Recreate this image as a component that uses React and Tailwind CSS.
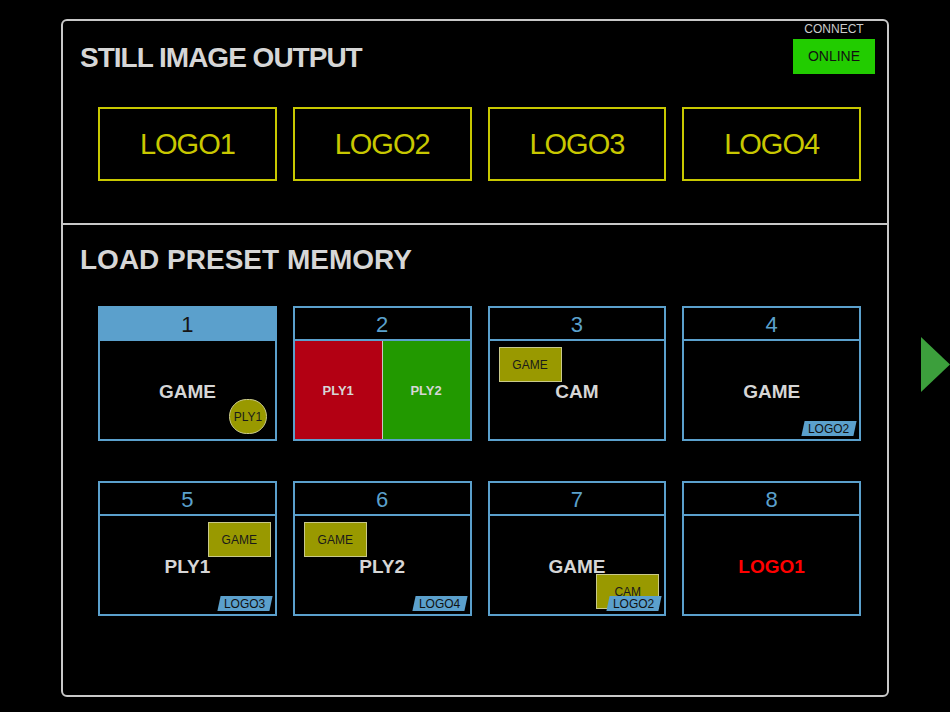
import React from 'react';

const Box = ({ className, children }) => (
    <div className={`absolute w-[63px] h-[35px] bg-[#999900] border border-[#c9c98a] flex items-center justify-center text-[12px] text-[#1a1a1a] ${className}`}>
        {children}
    </div>
);

const Flag = ({ className, children }) => (
    <div className={`absolute w-[52px] h-[15px] -skew-x-12 bg-[#5ba0cc] flex items-center justify-center ${className}`}>
        <span className="skew-x-12 text-[12px] leading-none text-[#111]">{children}</span>
    </div>
);

const Card = ({ n, active, label, labelColor = 'text-[#d6d6d6]', children, split }) => (
    <div className="h-[135px] border-2 border-[#5ba0cc] flex flex-col">
        <div className={`h-[33px] pt-[1px] border-b-2 border-[#5ba0cc] flex items-center justify-center text-[22px] ${active ? 'bg-[#5ba0cc] text-[#161616]' : 'text-[#5ba0cc]'}`}>
            {n}
        </div>
        {split ? (
            <div className="flex-1 flex">
                <div className="flex-1 bg-[#b30013] flex items-center justify-center pt-[2px] text-[13px] font-bold text-[#d6d6d6]">PLY1</div>
                <div className="w-px bg-[#c8c8c8]" />
                <div className="flex-1 bg-[#229900] flex items-center justify-center pt-[2px] text-[13px] font-bold text-[#d6d6d6]">PLY2</div>
            </div>
        ) : (
            <div className="flex-1 relative flex items-center justify-center pt-[4px]">
                <span className={`text-[19px] font-bold ${labelColor}`}>{label}</span>
                {children}
            </div>
        )}
    </div>
);

export default function App() {
    return (
        <div className="min-h-[712px] bg-black font-['Liberation_Sans',Arial,sans-serif] pt-[19px] pl-[61px] flex items-start">
            <div className="w-[828px] h-[678px] border-2 border-[#c8c8c8] rounded-[6px] flex flex-col">
                {/* still image output */}
                <div className="h-[204px] border-b-2 border-[#c8c8c8] flex flex-col">
                    <div className="h-[86px] flex justify-between items-start pl-[17px] pr-[12px]">
                        <h1 className="mt-[23px] h-[28px] leading-[28px] text-[28px] font-bold tracking-[-1px] text-[#d6d6d6]">
                            STILL IMAGE OUTPUT
                        </h1>
                        <div className="flex flex-col items-center">
                            <span className="mt-[1px] text-[12px] leading-[14px] text-[#cccccc]">CONNECT</span>
                            <button className="mt-[3px] w-[82px] h-[35px] bg-[#22cc00] text-[14px] text-[#111]">ONLINE</button>
                        </div>
                    </div>
                    <div className="ml-[35px] w-[763px] grid grid-cols-4 gap-4">
                        {['LOGO1', 'LOGO2', 'LOGO3', 'LOGO4'].map((l) => (
                            <div key={l} className="h-[74px] pt-[2px] border-2 border-[#c8c800] flex items-center justify-center text-[29px] tracking-[-1px] text-[#c8c800]">
                                {l}
                            </div>
                        ))}
                    </div>
                </div>

                {/* load preset memory */}
                <div className="flex-1 flex flex-col">
                    <h2 className="ml-[17px] mt-[21px] h-[28px] leading-[28px] text-[28px] font-bold text-[#d6d6d6]">
                        LOAD PRESET MEMORY
                    </h2>
                    <div className="ml-[35px] mt-[32px] w-[763px] grid grid-cols-4 gap-x-4 gap-y-[40px]">
                        <Card n="1" active label="GAME">
                            <div className="absolute left-[129px] top-[58px] w-[38px] h-[35px] rounded-full bg-[#999900] border border-[#c9c98a] flex items-center justify-center text-[12px] text-[#1a1a1a]">
                                PLY1
                            </div>
                        </Card>
                        <Card n="2" split />
                        <Card n="3" label="CAM">
                            <Box className="left-[9px] top-[6px]">GAME</Box>
                        </Card>
                        <Card n="4" label="GAME">
                            <Flag className="right-[4px] bottom-[3px]">LOGO2</Flag>
                        </Card>
                        <Card n="5" label="PLY1">
                            <Box className="right-[4px] top-[6px]">GAME</Box>
                            <Flag className="right-[4px] bottom-[3px]">LOGO3</Flag>
                        </Card>
                        <Card n="6" label="PLY2">
                            <Box className="left-[9px] top-[6px]">GAME</Box>
                            <Flag className="right-[4px] bottom-[3px]">LOGO4</Flag>
                        </Card>
                        <Card n="7" label="GAME">
                            <Box className="right-[5px] bottom-[5px] items-start pt-[8px]">CAM</Box>
                            <Flag className="right-[4px] bottom-[3px]">LOGO2</Flag>
                        </Card>
                        <Card n="8" label="LOGO1" labelColor="text-[#ff0000]" />
                    </div>
                </div>
            </div>

            <svg className="ml-[32px] mt-[318px]" width="29" height="55" viewBox="0 0 29 55">
                <polygon points="0,0 29,27.5 0,55" fill="#3c9f3c" />
            </svg>
        </div>
    );
}
